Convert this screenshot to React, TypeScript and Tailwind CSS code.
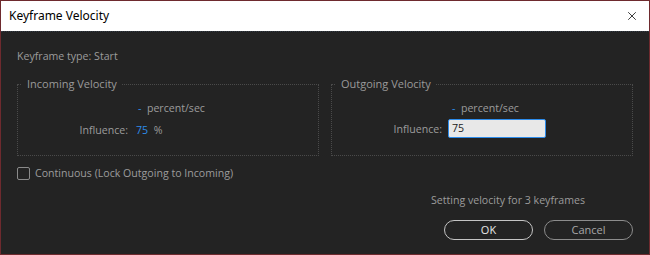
import { X } from 'lucide-react';

function GroupBox({ title, children }: { title: string; children: React.ReactNode }) {
  return (
    <fieldset className="w-[303px] h-[79px] border border-dotted border-[#4a4a4a] px-0 pb-0">
      <legend className="ml-[4px] px-[5px] text-[11px] leading-[14px] text-[#9a9a9a]">{title}</legend>
      {children}
    </fieldset>
  );
}

export default function App() {
  return (
    <div className="w-[650px] h-[255px] border border-[#6e2a2e] bg-[#232323] flex flex-col font-['Open_Sans',sans-serif] text-[10.6px] text-[#9c9c9c]">
      {/* title bar */}
      <div className="h-[30px] bg-white flex items-center justify-between pl-[8px] pr-[10px] font-['Noto_Sans',sans-serif]">
        <span className="text-[12px] text-black">Keyframe Velocity</span>
        <X className="w-[14px] h-[14px] text-black" strokeWidth={1.3} />
      </div>
      <div className="h-px border-t border-dotted border-[#333a44]" />

      <div className="flex-1 flex flex-col px-[16px]">
        <div className="mt-[16px] h-[16px] leading-[16px]">Keyframe type: Start</div>

        <div className="mt-[13px] flex gap-[12px]">
          <GroupBox title="Incoming Velocity">
            <div className="grid grid-cols-[110px_1fr] gap-x-[8px] gap-y-[6px] items-center pt-[9px]">
              <span />
              <span className="h-[16px] leading-[16px] pl-[2px]">
                <span className="text-[#2d8ceb]">-</span>&nbsp; percent/sec
              </span>
              <span className="text-right h-[16px] leading-[16px]">Influence:</span>
              <span className="h-[16px] leading-[16px]">
                <span className="text-[#2d8ceb]">75</span>&nbsp; %
              </span>
            </div>
          </GroupBox>
          <GroupBox title="Outgoing Velocity">
            <div className="grid grid-cols-[110px_1fr] gap-x-[6px] gap-y-[3px] items-center pt-[9px]">
              <span />
              <span className="h-[16px] leading-[16px] pl-[4px]">
                <span className="text-[#2d8ceb]">-</span>&nbsp; percent/sec
              </span>
              <span className="text-right h-[16px] leading-[16px]">Influence:</span>
              <div className="w-[98px] h-[19px] bg-[#e8e8e8] border border-[#2d8ceb] rounded-[2px] px-[3px] leading-[17px] text-[#1a1a1a]">
                75
              </div>
            </div>
          </GroupBox>
        </div>

        <label className="mt-[10px] flex items-center gap-[5px] h-[14px]">
          <span className="w-[13px] h-[13px] border-[1.5px] border-[#8a8a8a] rounded-[2px]" />
          <span className="leading-[14px]">Continuous (Lock Outgoing to Incoming)</span>
        </label>

        <div className="mt-[12px] h-[16px] leading-[16px] text-right pr-[48px]">Setting velocity for 3 keyframes</div>

        <div className="mt-[12px] flex justify-end gap-[11px]">
          <button className="w-[89px] h-[20px] rounded-full border border-[#c4c4c4] text-[#e6e6e6] text-[11px] leading-[18px]">
            OK
          </button>
          <button className="w-[89px] h-[20px] rounded-full border border-[#8c8c8c] text-[#a8a8a8] text-[11px] leading-[18px]">
            Cancel
          </button>
        </div>
      </div>
    </div>
  );
}
